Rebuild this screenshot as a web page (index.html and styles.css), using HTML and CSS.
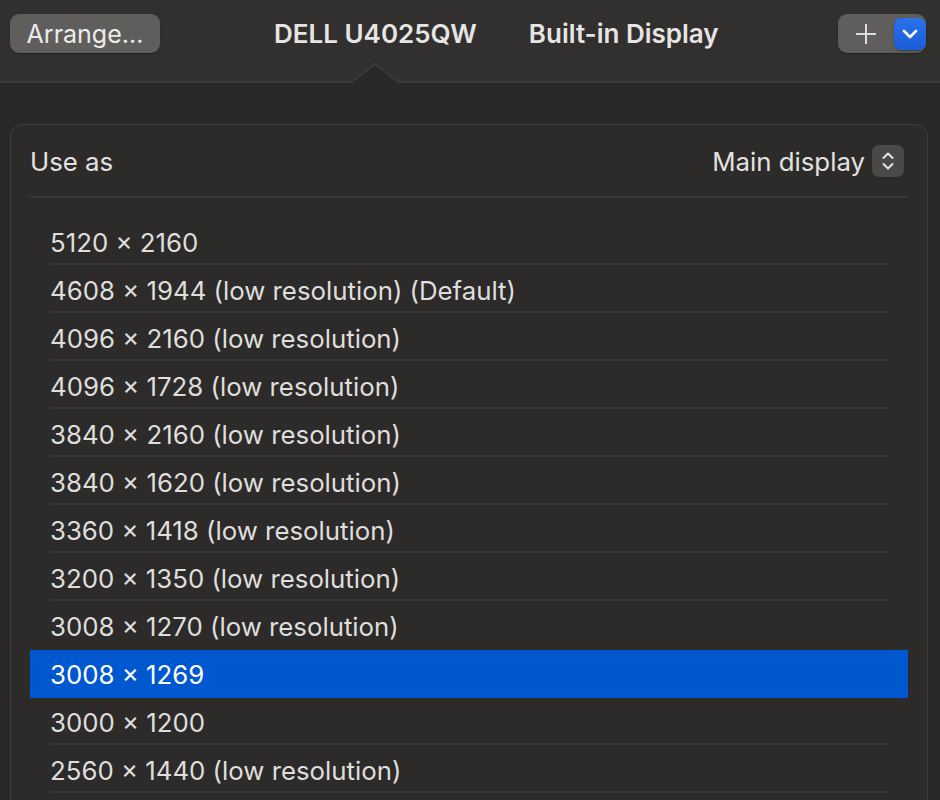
FILE: index.html
```html
<!DOCTYPE html>
<html lang="en">
<head>
    <meta charset="UTF-8">
    <meta name="viewport" content="width=device-width, initial-scale=1.0">
    <title>Displays</title>
    <link rel="stylesheet" href="styles.css">
</head>
<body>
    <div class="window">
        <header class="toolbar">
            <button class="btn arrange">Arrange…</button>

            <nav class="tabs">
                <span class="tab active">
                    DELL U4025QW
                    <svg class="notch" width="44" height="23" viewBox="0 0 44 23">
                        <polygon points="0,20 22,3 44,20 44,23 0,23" fill="#292826"/>
                        <polyline points="0,20 22,3 44,20" fill="none" stroke="#3b3a38" stroke-width="2"/>
                    </svg>
                </span>
                <span class="tab">Built-in Display</span>
            </nav>

            <div class="add-group">
                <span class="plus">
                    <svg width="22" height="22" viewBox="0 0 22 22">
                        <path d="M11 1v20M1 11h20" stroke="#dcdcdc" stroke-width="2" fill="none"/>
                    </svg>
                </span>
                <span class="menu-btn">
                    <svg width="16" height="10" viewBox="0 0 16 10">
                        <path d="M2 2l6 6 6-6" stroke="#ffffff" stroke-width="2.6" fill="none" stroke-linecap="round" stroke-linejoin="round"/>
                    </svg>
                </span>
            </div>
        </header>

        <main class="content">
            <section class="panel">
                <div class="panel-header">
                    <span>Use as</span>
                    <div class="popup">
                        <span>Main display</span>
                        <span class="stepper">
                            <svg width="14" height="22" viewBox="0 0 14 22">
                                <path d="M2.5 8l4.5-4.5 4.5 4.5M2.5 14l4.5 4.5 4.5-4.5" stroke="#e6e6e6" stroke-width="2" fill="none" stroke-linecap="round" stroke-linejoin="round"/>
                            </svg>
                        </span>
                    </div>
                </div>

                <ul class="res-list">
                    <li>5120 × 2160</li>
                    <li>4608 × 1944 (low resolution) (Default)</li>
                    <li>4096 × 2160 (low resolution)</li>
                    <li>4096 × 1728 (low resolution)</li>
                    <li>3840 × 2160 (low resolution)</li>
                    <li>3840 × 1620 (low resolution)</li>
                    <li>3360 × 1418 (low resolution)</li>
                    <li>3200 × 1350 (low resolution)</li>
                    <li>3008 × 1270 (low resolution)</li>
                    <li class="selected">3008 × 1269</li>
                    <li>3000 × 1200</li>
                    <li>2560 × 1440 (low resolution)</li>
                </ul>
            </section>
        </main>
    </div>
</body>
</html>
```

FILE: styles.css
```css
html, body {
    margin: 0;
    height: 100%;
}

body {
    background-color: #292826;
    color: #e3e2e1;
    font-family: Inter, "Noto Sans", sans-serif;
    font-size: 25.8px;
    overflow: hidden;
}

.window {
    width: 940px;
    height: 800px;
    overflow: hidden;
}

/* top bar */
.toolbar {
    display: flex;
    align-items: flex-start;
    height: 81px;
    padding: 0 14px 0 10px;
    background-color: #31302e;
    border-bottom: 2px solid #3b3a38;
}

.btn {
    font-family: inherit;
    font-size: 25px;
    color: #ececeb;
    border: none;
    margin-top: 14px;
    padding: 0;
}

.arrange {
    width: 150px;
    height: 39px;
    border-radius: 9px;
    background-color: #5f5e5c;
    box-shadow: 0 1px 1px rgba(0, 0, 0, 0.3);
}

.tabs {
    display: flex;
    align-self: stretch;
    gap: 52px;
    margin-left: 114px;
}

.tab {
    position: relative;
    padding-top: 14px;
    line-height: 39px;
    font-size: 26px;
    font-weight: 600;
    color: #e6e5e4;
    white-space: nowrap;
}

.notch {
    position: absolute;
    left: 50%;
    bottom: -3px;
    transform: translateX(-50%);
}

.add-group {
    display: flex;
    align-items: center;
    margin-left: auto;
    margin-top: 14px;
    width: 88px;
    height: 39px;
    border-radius: 9px;
    background-color: #5f5e5c;
    box-shadow: 0 1px 1px rgba(0, 0, 0, 0.3);
}

.plus {
    display: flex;
    justify-content: center;
    width: 56px;
}

.menu-btn {
    display: flex;
    align-items: center;
    justify-content: center;
    width: 32px;
    height: 32px;
    border-radius: 7px;
    background: linear-gradient(#2c70ea, #1a5cd8);
    box-shadow: 0 1px 2px rgba(0, 0, 0, 0.35);
}

/* settings panel */
.content {
    padding: 41px 12px 0 10px;
}

.panel {
    background-color: #2c2b29;
    border: 1px solid #3f3e3c;
    border-radius: 12px;
    padding: 0 19px;
    height: 720px;
}

.panel-header {
    display: flex;
    align-items: center;
    justify-content: space-between;
    height: 73px;
    padding-top: 1px;
    box-sizing: border-box;
    border-bottom: 2px solid #383735;
}

.popup {
    display: flex;
    align-items: center;
    gap: 7px;
    margin-right: 4px;
}

.stepper {
    display: flex;
    align-items: center;
    justify-content: center;
    width: 32px;
    height: 32px;
    margin-top: -1px;
    border-radius: 7px;
    background-color: #4a4947;
}

.res-list {
    list-style: none;
    margin: 0;
    padding: 20px 0 0;
}

.res-list li {
    position: relative;
    height: 48px;
    line-height: 50px;
    padding: 0 20px;
    color: #dfdedc;
    white-space: nowrap;
}

.res-list li::after {
    content: "";
    position: absolute;
    left: 20px;
    right: 20px;
    bottom: 1px;
    height: 2px;
    background-color: #383735;
}

.res-list li.selected {
    background-color: #0058d0;
    color: #ffffff;
}

.res-list li.selected::after,
.res-list li:has(+ .selected)::after {
    display: none;
}
```
